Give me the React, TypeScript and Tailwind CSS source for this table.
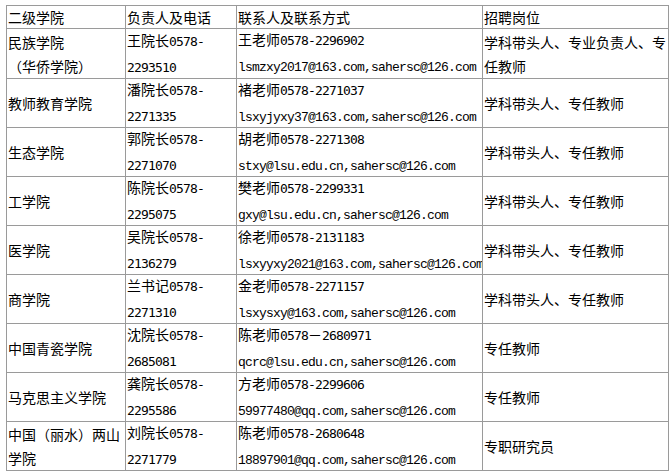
import React from "react";

type Row = {
  college: string[];
  head: string[];
  contact: string[];
  post: string[];
};

const rows: Row[] = [
  {
    college: ["民族学院", "（华侨学院）"],
    head: ["王院长0578-", "2293510"],
    contact: ["王老师0578-2296902", "lsmzxy2017@163.com,sahersc@126.com"],
    post: ["学科带头人、专业负责人、专", "任教师"],
  },
  {
    college: ["教师教育学院"],
    head: ["潘院长0578-", "2271335"],
    contact: ["褚老师0578-2271037", "lsxyjyxy37@163.com,sahersc@126.com"],
    post: ["学科带头人、专任教师"],
  },
  {
    college: ["生态学院"],
    head: ["郭院长0578-", "2271070"],
    contact: ["胡老师0578-2271308", "stxy@lsu.edu.cn,sahersc@126.com"],
    post: ["学科带头人、专任教师"],
  },
  {
    college: ["工学院"],
    head: ["陈院长0578-", "2295075"],
    contact: ["樊老师0578-2299331", "gxy@lsu.edu.cn,sahersc@126.com"],
    post: ["学科带头人、专任教师"],
  },
  {
    college: ["医学院"],
    head: ["吴院长0578-", "2136279"],
    contact: ["徐老师0578-2131183", "lsxyyxy2021@163.com,sahersc@126.com"],
    post: ["学科带头人、专任教师"],
  },
  {
    college: ["商学院"],
    head: ["兰书记0578-", "2271310"],
    contact: ["金老师0578-2271157", "lsxysxy@163.com,sahersc@126.com"],
    post: ["学科带头人、专任教师"],
  },
  {
    college: ["中国青瓷学院"],
    head: ["沈院长0578-", "2685081"],
    contact: ["陈老师0578－2680971", "qcrc@lsu.edu.cn,sahersc@126.com"],
    post: ["专任教师"],
  },
  {
    college: ["马克思主义学院"],
    head: ["龚院长0578-", "2295586"],
    contact: ["方老师0578-2299606", "59977480@qq.com,sahersc@126.com"],
    post: ["专任教师"],
  },
  {
    college: ["中国（丽水）两山", "学院"],
    head: ["刘院长0578-", "2271779"],
    contact: ["陈老师0578-2680648", "18897901@qq.com,sahersc@126.com"],
    post: ["专职研究员"],
  },
];

// split a line into CJK and half-width runs so the latin part gets a 7px mono advance
function Line({ text }: { text: string }) {
  const parts = text.split(/([\x21-\x7e]+)/).filter((p) => p !== "");
  return (
    <div className="whitespace-nowrap">
      {parts.map((p, i) => {
        if (!/^[\x21-\x7e]+$/.test(p)) return <span key={i}>{p}</span>;
        if (/[a-z@]/.test(p))
          return (
            <span
              key={i}
              className="font-['Liberation_Mono',monospace] text-[13px] tracking-[-0.8px]"
            >
              {p}
            </span>
          );
        return (
          <span
            key={i}
            className="font-['DejaVu_Sans_Mono',monospace] text-[13px] tracking-[-0.83px]"
          >
            {p}
          </span>
        );
      })}
    </div>
  );
}

function Cell({ lines, header }: { lines: string[]; header?: boolean }) {
  return (
    <div
      className={
        "flex flex-col justify-center overflow-hidden bg-white pl-px text-black " +
        (header ? "leading-[22px]" : "leading-[24px]")
      }
    >
      {lines.map((l, i) => (
        <Line key={i} text={l} />
      ))}
    </div>
  );
}

export default function App() {
  return (
    <div className="min-h-screen bg-white pt-[5px] pl-[6px]">
      <div className="grid w-fit grid-cols-[118px_110px_245px_185px] grid-rows-[22px_49px_repeat(8,48px)] gap-px bg-[#9a9a9a] p-px font-['Noto_Sans_CJK_SC',sans-serif] text-[14px]">
        <Cell header lines={["二级学院"]} />
        <Cell header lines={["负责人及电话"]} />
        <Cell header lines={["联系人及联系方式"]} />
        <Cell header lines={["招聘岗位"]} />
        {rows.map((r, i) => (
          <React.Fragment key={i}>
            <Cell lines={r.college} />
            <Cell lines={r.head} />
            <Cell lines={r.contact} />
            <Cell lines={r.post} />
          </React.Fragment>
        ))}
      </div>
    </div>
  );
}
